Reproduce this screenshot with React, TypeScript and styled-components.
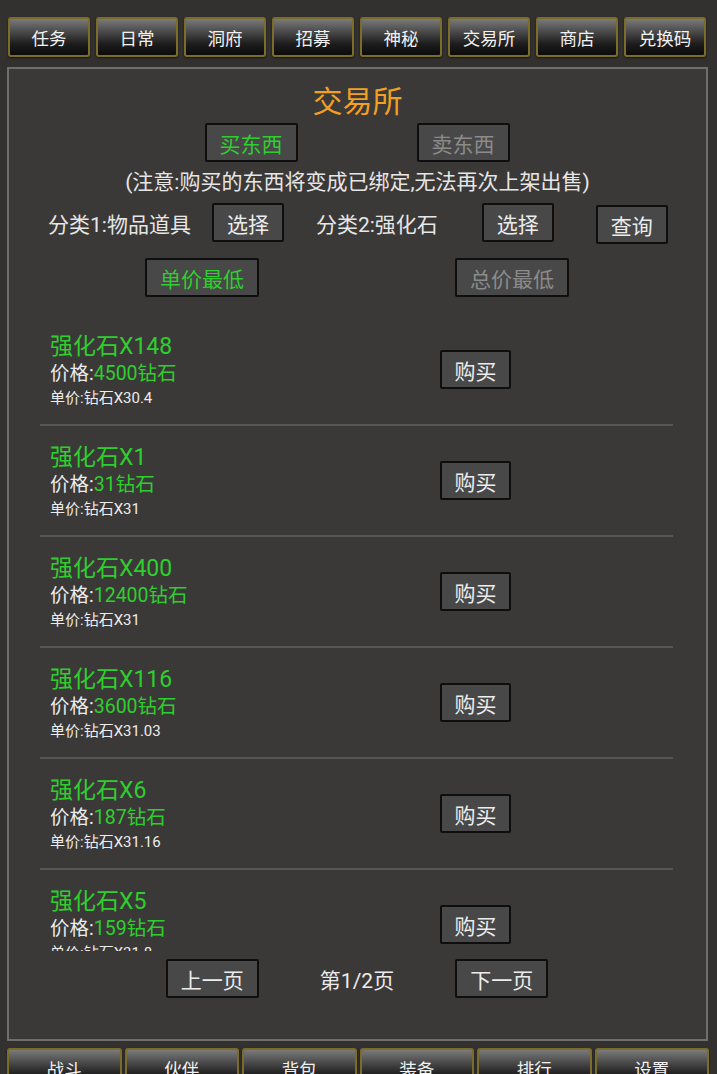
import React from 'react';
import styled, { createGlobalStyle } from 'styled-components';

const GlobalStyle = createGlobalStyle`
  html, body {
    margin: 0;
    padding: 0;
    background: #333130;
    font-family: Roboto, "Noto Sans CJK SC", "Noto Sans", sans-serif;
    color: #e6e6e6;
  }
`;

type Listing = {
  count: number;
  price: number;
  unit: string;
};

const listings: Listing[] = [
  { count: 148, price: 4500, unit: '30.4' },
  { count: 1, price: 31, unit: '31' },
  { count: 400, price: 12400, unit: '31' },
  { count: 116, price: 3600, unit: '31.03' },
  { count: 6, price: 187, unit: '31.16' },
  { count: 5, price: 159, unit: '31.8' }
];

const topTabs = ['任务', '日常', '洞府', '招募', '神秘', '交易所', '商店', '兑换码'];
const bottomTabs = ['战斗', '伙伴', '背包', '装备', '排行', '设置'];

function App() {
  return (
    <Page>
      <GlobalStyle />
      <NavBar cols={8}>
        {topTabs.map((t) => (
          <NavButton key={t}>{t}</NavButton>
        ))}
      </NavBar>

      <Panel>
        <Title>交易所</Title>

        <ToggleRow gap={119}>
          <Button active>买东西</Button>
          <Button dim>卖东西</Button>
        </ToggleRow>

        <Note>(注意:购买的东西将变成已绑定,无法再次上架出售)</Note>

        <FilterRow>
          <FilterLabel>分类1:物品道具</FilterLabel>
          <Button>选择</Button>
          <FilterLabel>分类2:强化石</FilterLabel>
          <Button>选择</Button>
          <Button>查询</Button>
        </FilterRow>

        <ToggleRow gap={196} sort>
          <Button active>单价最低</Button>
          <Button dim>总价最低</Button>
        </ToggleRow>

        <List>
          {listings.map((l, i) => (
            <Item key={i}>
              <ItemInfo>
                <ItemName>强化石X{l.count}</ItemName>
                <ItemPrice>
                  价格:<Green>{l.price}钻石</Green>
                </ItemPrice>
                <ItemUnit>单价:钻石X{l.unit}</ItemUnit>
              </ItemInfo>
              <Button>购买</Button>
            </Item>
          ))}
        </List>

        <Pager>
          <Button>上一页</Button>
          <PageText>第1/2页</PageText>
          <Button>下一页</Button>
        </Pager>
      </Panel>

      <NavBar cols={6} bottom>
        {bottomTabs.map((t) => (
          <NavButton key={t}>{t}</NavButton>
        ))}
      </NavBar>
    </Page>
  );
}

export default App;

const Page = styled.div`
  padding: 17px 9px 0 8px;
  width: 717px;
  box-sizing: border-box;
`;

const NavBar = styled.div<{ cols: number; bottom?: boolean }>`
  display: grid;
  grid-template-columns: repeat(${(p) => p.cols}, 1fr);
  gap: ${(p) => (p.bottom ? '3px' : '6px')};
  margin-top: ${(p) => (p.bottom ? '7px' : '0')};
  margin-left: ${(p) => (p.bottom ? '-1px' : '0')};
  margin-right: ${(p) => (p.bottom ? '-1px' : '2px')};
`;

const NavButton = styled.div`
  height: 40px;
  box-sizing: border-box;
  border: 2px solid #7c6c2a;
  border-radius: 3px;
  background: linear-gradient(180deg, #7a7a7a 0%, #4a4a4a 35%, #1c1c1c 70%, #0c0c0c 100%);
  color: #f2f2f2;
  font-size: 17.5px;
  display: flex;
  align-items: center;
  justify-content: center;
  box-shadow: 0 1px 2px rgba(0, 0, 0, 0.6);
`;

const Panel = styled.div`
  margin-top: 10px;
  margin-left: -1px;
  border: 2px solid #6f6e6c;
  background: #3b3938;
  padding: 14px 0 41px;
  display: flex;
  flex-direction: column;
  align-items: center;
`;

const Title = styled.div`
  color: #f0a022;
  font-size: 30px;
  line-height: 38px;
  text-align: center;
`;

const ToggleRow = styled.div<{ gap: number; sort?: boolean }>`
  display: flex;
  justify-content: center;
  gap: ${(p) => p.gap}px;
  margin-top: ${(p) => (p.sort ? '14px' : '2px')};
  margin-left: -1px;
`;

const Button = styled.div<{ active?: boolean; dim?: boolean }>`
  box-sizing: border-box;
  height: 39px;
  padding: 0 13px;
  border: 2px solid #0e0e0e;
  border-radius: 2px;
  background: #484848;
  color: ${(p) => (p.active ? '#2fce2f' : p.dim ? '#8b8b8b' : '#ececec')};
  font-size: 21px;
  display: flex;
  align-items: center;
  justify-content: center;
  white-space: nowrap;
`;

const Note = styled.div`
  font-size: 21px;
  line-height: 32px;
  margin-top: 4px;
  color: #e6e6e6;
  text-align: center;
`;

const FilterRow = styled.div`
  align-self: stretch;
  display: flex;
  align-items: center;
  padding-left: 39px;
  margin-top: 3px;

  & > :nth-child(2) {
    margin-left: 21px;
  }
  & > :nth-child(3) {
    margin-left: 32px;
  }
  & > :nth-child(4) {
    margin-left: 44px;
  }
  & > :nth-child(5) {
    margin-left: 42px;
    margin-top: 4px;
  }
`;

const FilterLabel = styled.div`
  font-size: 21px;
  color: #e6e6e6;
`;

const List = styled.div`
  align-self: stretch;
  margin: 18px 33px 0 31px;
  height: 636px;
  overflow: hidden;
`;

const Item = styled.div`
  display: grid;
  grid-template-columns: 390px 71px;
  align-items: center;
  height: 111px;
  box-sizing: border-box;
  padding: 0 0 0 10px;
  border-bottom: 2px solid #575655;
`;

const ItemInfo = styled.div`
  display: flex;
  flex-direction: column;
  padding-top: 1px;
`;

const ItemName = styled.div`
  color: #2fce2f;
  font-size: 23px;
  line-height: 29px;
`;

const ItemPrice = styled.div`
  color: #ececec;
  font-size: 19.5px;
  line-height: 26px;
`;

const Green = styled.span`
  color: #2fce2f;
`;

const ItemUnit = styled.div`
  color: #ececec;
  font-size: 15px;
  line-height: 22px;
`;

const Pager = styled.div`
  display: flex;
  align-items: center;
  gap: 61px;
  margin-top: 8px;
  margin-left: -1px;
`;

const PageText = styled.div`
  font-size: 21px;
  color: #ececec;
`;
